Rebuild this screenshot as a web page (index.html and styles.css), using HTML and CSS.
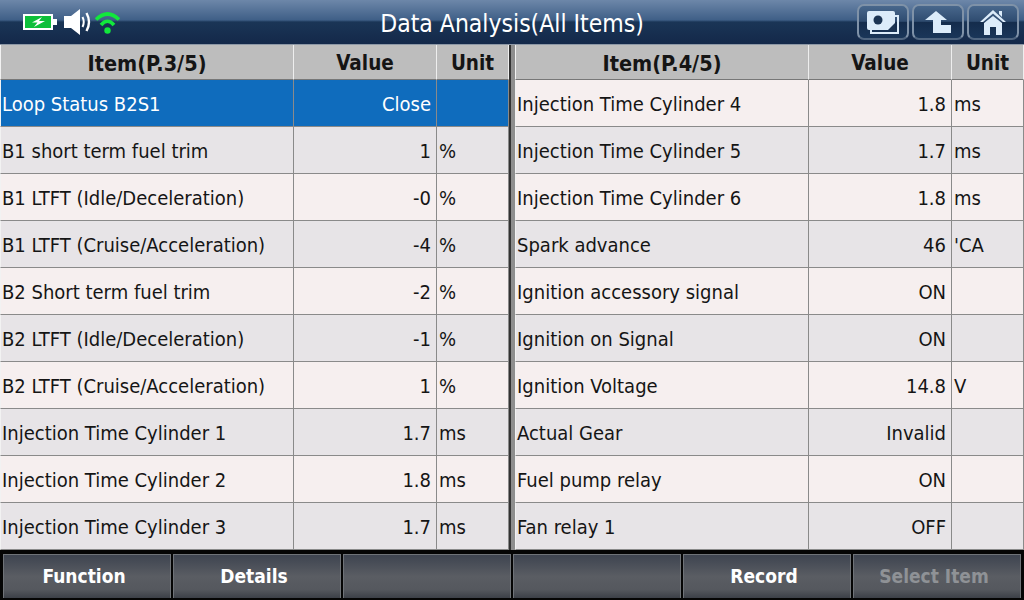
FILE: index.html
```html
<!DOCTYPE html>
<html lang="en">
<head>
    <meta charset="UTF-8">
    <title>Data Analysis</title>
    <link rel="stylesheet" href="styles.css">
</head>
<body>
    <div class="topbar">
        <div class="status">
            <svg width="35" height="16" viewBox="0 0 35 16">
                <rect x="1" y="1" width="28" height="14" fill="#0dbf3a" stroke="#fff" stroke-width="2"/>
                <rect x="30" y="5" width="4" height="6" fill="#fff"/>
                <path d="M19 3 L9 8.5 L14.5 8.5 L11 13 L22 7 L16 7 Z" fill="#fff"/>
            </svg>
            <svg class="ic-sound" width="28" height="26" viewBox="0 0 28 26">
                <path d="M0 7 H7 L16 0 V26 L7 19 H0 Z" fill="#fff"/>
                <path d="M18.5 8 Q21 13 18.5 18" fill="none" stroke="#fff" stroke-width="2"/>
                <path d="M22.5 4 Q27.5 13 22.5 22" fill="none" stroke="#fff" stroke-width="2.4"/>
            </svg>
            <svg class="ic-wifi" width="27" height="24" viewBox="0 0 27 24">
                <path d="M2 9.5 Q13.5 -1.5 25 9.5" fill="none" stroke="#12e83c" stroke-width="3.6"/>
                <path d="M7 15 Q13.5 7.5 20 15" fill="none" stroke="#12e83c" stroke-width="3.6"/>
                <circle cx="13.5" cy="20.5" r="3.2" fill="#12e83c"/>
            </svg>
        </div>
        <div class="title">Data Analysis(All Items)</div>
        <div class="topbtns">
            <div class="topbtn">
                <svg width="32" height="24" viewBox="0 0 32 24">
                    <path d="M4 19 V23 H31 V6 H27" fill="none" stroke="#dcecfa" stroke-width="2"/>
                    <rect x="0" y="1" width="28" height="19" rx="2" fill="#dcecfa"/>
                    <circle cx="11" cy="10" r="4.5" fill="#1c3554"/>
                    <path d="M21 20 L28 13 V20 Z" fill="#1c3554"/>
                </svg>
            </div>
            <div class="topbtn">
                <svg width="26" height="24" viewBox="0 0 26 24">
                    <path d="M11 1 L22 10 H16 V15 H26 V23 H8 V10 H0 Z" fill="#dcecfa"/>
                </svg>
            </div>
            <div class="topbtn">
                <svg width="26" height="25" viewBox="0 0 26 25">
                    <path d="M13 0 L26 12 H23 L13 3.5 L3 12 H0 Z" fill="#dcecfa"/>
                    <path d="M19 1 H22 V7 L19 4 Z" fill="#dcecfa"/>
                    <path d="M4 13 L13 6 L22 13 V25 H16 V17 H10 V25 H4 Z" fill="#dcecfa"/>
                </svg>
            </div>
        </div>
    </div>

    <div class="tables">
        <table class="data">
            <tr><th class="c-item">Item(P.3/5)</th><th class="c-value">Value</th><th class="c-unit">Unit</th></tr>
            <tr class="sel"><td>Loop Status B2S1</td><td class="val">Close</td><td></td></tr>
            <tr><td>B1 short term fuel trim</td><td class="val">1</td><td>%</td></tr>
            <tr><td>B1 LTFT (Idle/Deceleration)</td><td class="val">-0</td><td>%</td></tr>
            <tr><td>B1 LTFT (Cruise/Acceleration)</td><td class="val">-4</td><td>%</td></tr>
            <tr><td>B2 Short term fuel trim</td><td class="val">-2</td><td>%</td></tr>
            <tr><td>B2 LTFT (Idle/Deceleration)</td><td class="val">-1</td><td>%</td></tr>
            <tr><td>B2 LTFT (Cruise/Acceleration)</td><td class="val">1</td><td>%</td></tr>
            <tr><td>Injection Time Cylinder 1</td><td class="val">1.7</td><td>ms</td></tr>
            <tr><td>Injection Time Cylinder 2</td><td class="val">1.8</td><td>ms</td></tr>
            <tr><td>Injection Time Cylinder 3</td><td class="val">1.7</td><td>ms</td></tr>
        </table>
        <div class="divider"></div>
        <table class="data">
            <tr><th class="c-item">Item(P.4/5)</th><th class="c-value">Value</th><th class="c-unit">Unit</th></tr>
            <tr><td>Injection Time Cylinder 4</td><td class="val">1.8</td><td>ms</td></tr>
            <tr><td>Injection Time Cylinder 5</td><td class="val">1.7</td><td>ms</td></tr>
            <tr><td>Injection Time Cylinder 6</td><td class="val">1.8</td><td>ms</td></tr>
            <tr><td>Spark advance</td><td class="val">46</td><td>'CA</td></tr>
            <tr><td>Ignition accessory signal</td><td class="val">ON</td><td></td></tr>
            <tr><td>Ignition on Signal</td><td class="val">ON</td><td></td></tr>
            <tr><td>Ignition Voltage</td><td class="val">14.8</td><td>V</td></tr>
            <tr><td>Actual Gear</td><td class="val">Invalid</td><td></td></tr>
            <tr><td>Fuel pump relay</td><td class="val">ON</td><td></td></tr>
            <tr><td>Fan relay 1</td><td class="val">OFF</td><td></td></tr>
        </table>
    </div>

    <div class="footer">
        <div class="fbtn">Function</div>
        <div class="fbtn">Details</div>
        <div class="fbtn"></div>
        <div class="fbtn"></div>
        <div class="fbtn">Record</div>
        <div class="fbtn off">Select Item</div>
    </div>
</body>
</html>
```

FILE: styles.css
```css
* {
    box-sizing: border-box;
}
body {
    margin: 0;
    width: 1024px;
    height: 600px;
    overflow: hidden;
    background: #2a2a2c;
    font-family: "DejaVu Sans", sans-serif;
    font-stretch: condensed;
}
.topbar {
    height: 45px;
    display: flex;
    align-items: center;
    border-bottom: 1px solid #8d98a6;
    background: linear-gradient(#6d87a9 0, #3f5f87 20px, #1a3556 22px, #14294a 43px);
}
.status {
    display: flex;
    align-items: center;
    gap: 4px;
    padding-left: 23px;
    width: 167px;
}
.ic-sound {
    margin-left: 2px;
}
.ic-wifi {
    margin-left: -2px;
}
.title {
    flex: 1;
    text-align: center;
    color: #fff;
    font-size: 24.5px;
    padding-top: 2px;
}
.topbtns {
    display: flex;
    gap: 3px;
    padding-right: 5px;
}
.topbtn {
    width: 52px;
    height: 36px;
    border: 2px solid #7f92a8;
    border-bottom-color: #4f6580;
    border-radius: 7px;
    background: linear-gradient(#48678c, #2f4c70 48%, #142c4c 50%, #1a3659);
    display: flex;
    align-items: center;
    justify-content: center;
}
.tables {
    display: flex;
    height: 505px;
    background: #8e8e8e;
}
.divider {
    width: 6px;
    border-left: 2px solid #333;
}
.data {
    border-collapse: separate;
    border-spacing: 0;
    table-layout: fixed;
    width: 509px;
    height: 505px;
    font-size: 20px;
    color: #151515;
}
.data th {
    height: 35px;
    padding: 2px 0 0;
    background: #bdbdbd;
    font-weight: bold;
    font-size: 20.5px;
    border-right: 1px solid #eee;
    border-bottom: 1px solid #777;
    text-align: center;
}
.data .c-item {
    width: 294px;
    font-size: 21.5px;
}
.c-value { width: 143px; }
.data th:first-child,
.data td:first-child {
    border-left: 1px solid #f2f2f2;
}
.data td {
    height: 47px;
    padding: 2px 2px 0 1px;
    border-right: 1px solid #8a8a8a;
    border-bottom: 1px solid #8a8a8a;
    background: #f6efef;
    white-space: nowrap;
}
.data tr:nth-child(odd) td {
    background: #e7e4e7;
}
.data td + td {
    padding-left: 2px;
}
.data .val {
    text-align: right;
    padding-right: 5px;
}
.data .sel td {
    background: #0f6cbd;
    color: #fff;
}
.footer {
    height: 50px;
    display: flex;
    background: #050505;
    padding: 4px 3px 2px 3px;
    gap: 2px;
}
.fbtn {
    flex: 1;
    padding: 0 6px 2px 0;
    border: 1px solid #6f7378;
    border-bottom: none;
    background: linear-gradient(#3e4450, #5a5d63 50%, #55585e 80%, #3c4048);
    color: #fff;
    font-weight: bold;
    font-size: 19px;
    display: flex;
    align-items: center;
    justify-content: center;
}
.fbtn.off {
    color: #8f9296;
}
```
